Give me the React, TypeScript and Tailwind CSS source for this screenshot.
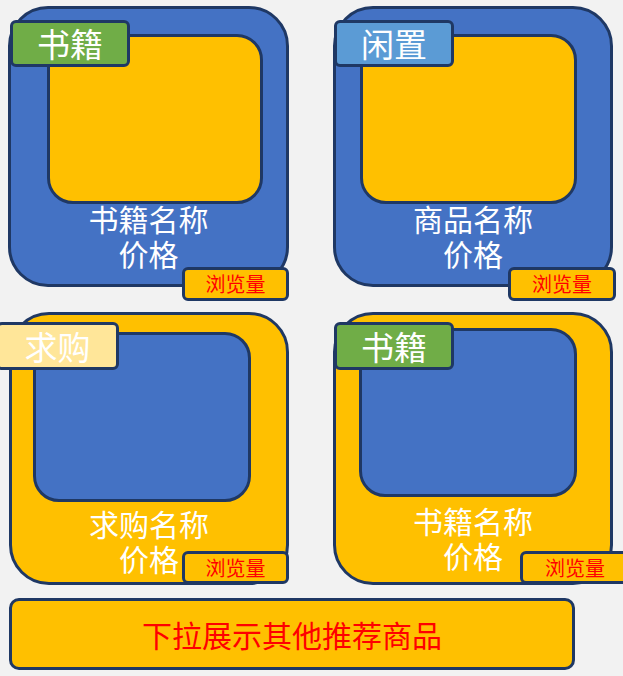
import React from "react";

const font = { fontFamily: '"Noto Sans CJK SC", "Noto Sans", sans-serif' };

type CardProps = {
  outer: string;
  inner: string;
  innerPos: string;
  textPos: string;
  tagBg: string;
  tagPos: string;
  tag: string;
  name: string;
  viewsPos: string;
};

function Card(p: CardProps) {
  return (
    <div className={`relative shrink-0 rounded-[40px] border-[3px] border-[#1f3864] ${p.outer}`}>
      <div className={`rounded-[26px] border-[3px] border-[#1f3864] ${p.inner} ${p.innerPos}`} />
      <div className={`flex flex-col items-center text-white text-[30px] leading-[35px] ${p.textPos}`}>
        <span>{p.name}</span>
        <span>价格</span>
      </div>
      <div
        className={`absolute flex items-center justify-center rounded-[6px] border-[3px] border-[#1f3864] text-white text-[33px] leading-none ${p.tagBg} ${p.tagPos}`}
      >
        {p.tag}
      </div>
      <div
        className={`absolute flex items-center justify-center rounded-[6px] border-[3px] border-[#1f3864] bg-[#ffc000] text-[#ff0000] text-[20px] leading-none ${p.viewsPos}`}
      >
        浏览量
      </div>
    </div>
  );
}

export default function App() {
  return (
    <div className="w-[623px] h-[676px] overflow-hidden bg-[#f2f2f2] pt-[6px]" style={font}>
      <div className="flex gap-[44px] pl-[8px]">
        <Card
          outer="w-[281px] h-[281px] bg-[#4472c4]"
          inner="bg-[#ffc000]"
          innerPos="ml-[36px] mt-[25px] w-[216px] h-[170px]"
          textPos="-mt-[3px]"
          tagBg="bg-[#70ad47]"
          tagPos="left-[-1px] top-[11px] w-[120px] h-[47px]"
          tag="书籍"
          name="书籍名称"
          viewsPos="left-[171px] top-[258px] w-[107px] h-[34px]"
        />
        <Card
          outer="w-[280px] h-[281px] bg-[#4472c4]"
          inner="bg-[#ffc000]"
          innerPos="ml-[24px] mt-[25px] w-[217px] h-[170px]"
          textPos="-mt-[3px]"
          tagBg="bg-[#5b9bd5]"
          tagPos="left-[-2px] top-[11px] w-[120px] h-[47px]"
          tag="闲置"
          name="商品名称"
          viewsPos="left-[172px] top-[258px] w-[108px] h-[34px]"
        />
      </div>
      <div className="flex gap-[44px] pl-[9px] mt-[25px]">
        <Card
          outer="w-[280px] h-[273px] bg-[#ffc000]"
          inner="bg-[#4472c4]"
          innerPos="ml-[21px] mt-[17px] w-[218px] h-[170px]"
          textPos="mt-[4px] leading-[34px]"
          tagBg="bg-[#ffe699]"
          tagPos="left-[-16px] top-[7px] w-[123px] h-[48px]"
          tag="求购"
          name="求购名称"
          viewsPos="left-[170px] top-[236px] w-[107px] h-[33px]"
        />
        <Card
          outer="w-[280px] h-[273px] bg-[#ffc000]"
          inner="bg-[#4472c4]"
          innerPos="ml-[23px] mt-[13px] w-[218px] h-[169px]"
          textPos="mt-[6px]"
          tagBg="bg-[#70ad47]"
          tagPos="left-[-2px] top-[7px] w-[120px] h-[48px]"
          tag="书籍"
          name="书籍名称"
          viewsPos="left-[184px] top-[236px] w-[110px] h-[33px]"
        />
      </div>
      <div className="ml-[9px] mt-[13px] flex h-[72px] w-[566px] items-center justify-center rounded-[10px] border-[3px] border-[#1f3864] bg-[#ffc000] text-[30px] leading-none text-[#ff0000]">
        下拉展示其他推荐商品
      </div>
    </div>
  );
}
